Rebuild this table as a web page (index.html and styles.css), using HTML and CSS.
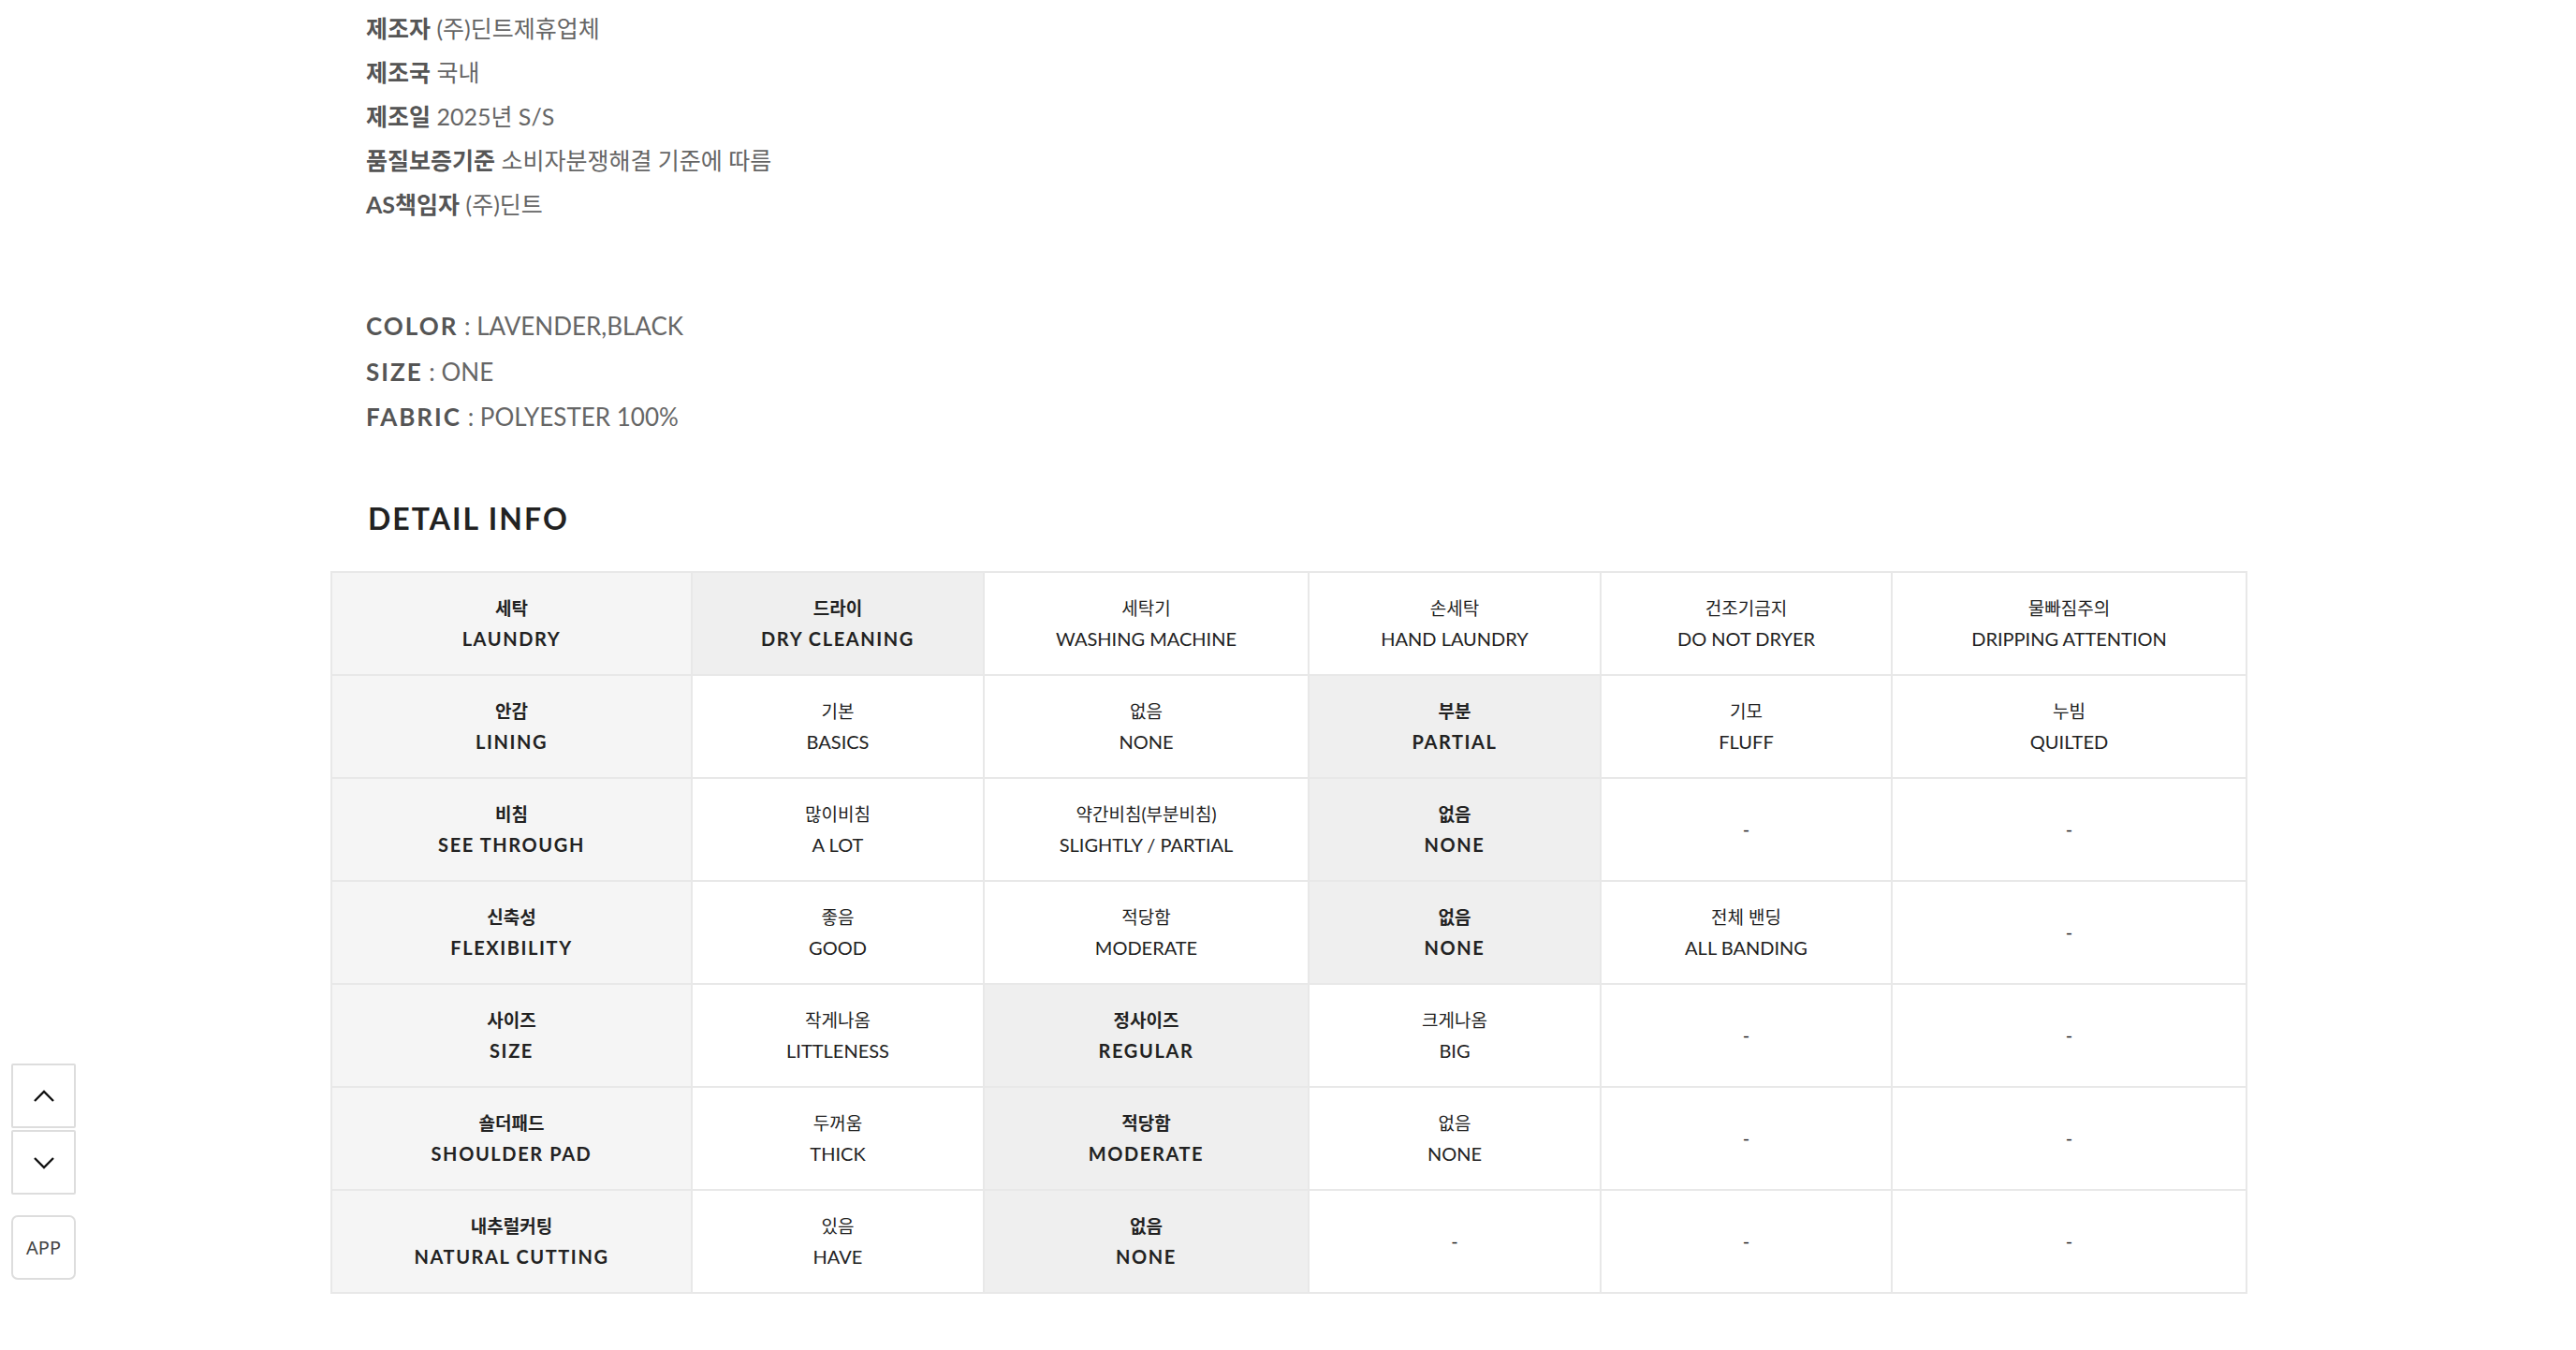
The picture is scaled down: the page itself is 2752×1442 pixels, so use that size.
FILE: index.html
```html
<!DOCTYPE html>
<html lang="ko">
<head>
    <meta charset="UTF-8">
    <title>상품 상세정보</title>
    <link rel="stylesheet" href="styles.css">
</head>
<body>
    <div class="detail">
        <div class="spec">
            <p><b>제조자</b> (주)딘트제휴업체</p>
            <p><b>제조국</b> 국내</p>
            <p><b>제조일</b> 2025년 S/S</p>
            <p><b>품질보증기준</b> 소비자분쟁해결 기준에 따름</p>
            <p><b>AS책임자</b> (주)딘트</p>
        </div>

        <div class="opts">
            <p><b>COLOR</b> : LAVENDER,BLACK</p>
            <p><b>SIZE</b> : ONE</p>
            <p><b>FABRIC</b> : POLYESTER 100%</p>
        </div>

        <h2 class="detail-title">DETAIL INFO</h2>

        <table class="info-table">
            <colgroup>
                <col style="width: 385px">
                <col style="width: 312px">
                <col style="width: 347px">
                <col style="width: 312px">
                <col style="width: 311px">
                <col style="width: 379px">
            </colgroup>
            <tr>
                <th><span>세탁</span><span>LAUNDRY</span></th>
                <td class="on"><span>드라이</span><span>DRY CLEANING</span></td>
                <td><span>세탁기</span><span>WASHING MACHINE</span></td>
                <td><span>손세탁</span><span>HAND LAUNDRY</span></td>
                <td><span>건조기금지</span><span>DO NOT DRYER</span></td>
                <td><span>물빠짐주의</span><span>DRIPPING ATTENTION</span></td>
            </tr>
            <tr>
                <th><span>안감</span><span>LINING</span></th>
                <td><span>기본</span><span>BASICS</span></td>
                <td><span>없음</span><span>NONE</span></td>
                <td class="on"><span>부분</span><span>PARTIAL</span></td>
                <td><span>기모</span><span>FLUFF</span></td>
                <td><span>누빔</span><span>QUILTED</span></td>
            </tr>
            <tr>
                <th><span>비침</span><span>SEE THROUGH</span></th>
                <td><span>많이비침</span><span>A LOT</span></td>
                <td><span>약간비침(부분비침)</span><span>SLIGHTLY / PARTIAL</span></td>
                <td class="on"><span>없음</span><span>NONE</span></td>
                <td>-</td>
                <td>-</td>
            </tr>
            <tr>
                <th><span>신축성</span><span>FLEXIBILITY</span></th>
                <td><span>좋음</span><span>GOOD</span></td>
                <td><span>적당함</span><span>MODERATE</span></td>
                <td class="on"><span>없음</span><span>NONE</span></td>
                <td><span>전체 밴딩</span><span>ALL BANDING</span></td>
                <td>-</td>
            </tr>
            <tr>
                <th><span>사이즈</span><span>SIZE</span></th>
                <td><span>작게나옴</span><span>LITTLENESS</span></td>
                <td class="on"><span>정사이즈</span><span>REGULAR</span></td>
                <td><span>크게나옴</span><span>BIG</span></td>
                <td>-</td>
                <td>-</td>
            </tr>
            <tr>
                <th><span>숄더패드</span><span>SHOULDER PAD</span></th>
                <td><span>두꺼움</span><span>THICK</span></td>
                <td class="on"><span>적당함</span><span>MODERATE</span></td>
                <td><span>없음</span><span>NONE</span></td>
                <td>-</td>
                <td>-</td>
            </tr>
            <tr>
                <th><span>내추럴커팅</span><span>NATURAL CUTTING</span></th>
                <td><span>있음</span><span>HAVE</span></td>
                <td class="on"><span>없음</span><span>NONE</span></td>
                <td>-</td>
                <td>-</td>
                <td>-</td>
            </tr>
        </table>
    </div>

    <!-- floating quick buttons -->
    <div class="quick">
        <a href="#" class="quick-btn">
            <svg width="24" height="14" viewBox="0 0 24 14"><polyline points="2,12 12,2 22,12" fill="none" stroke="#111" stroke-width="2.4"/></svg>
        </a>
        <a href="#" class="quick-btn">
            <svg width="24" height="14" viewBox="0 0 24 14"><polyline points="2,2 12,12 22,2" fill="none" stroke="#111" stroke-width="2.4"/></svg>
        </a>
        <a href="#" class="quick-btn app">APP</a>
    </div>
</body>
</html>
```

FILE: styles.css
```css
body {
    margin: 0;
    background: #fff;
    font-family: 'Lato', 'Noto Sans CJK KR', sans-serif;
    color: #222;
}

p {
    margin: 0;
}

.detail {
    width: 2046px;
    margin-left: 353px;
}

.spec {
    padding: 7px 38px 0;
    font-size: 25px;
    line-height: 47px;
    color: #666;
}

.spec b,
.opts b {
    color: #555;
    font-weight: 700;
}

.opts {
    margin-top: 82px;
    padding: 0 38px;
    font-size: 26px;
    line-height: 48.5px;
    color: #666;
}

.opts b {
    letter-spacing: 2px;
}

.detail-title {
    margin: 64px 0 0;
    padding: 0 40px;
    font-size: 32px;
    line-height: 40px;
    font-weight: 700;
    letter-spacing: 2px;
    color: #222;
}

.info-table {
    margin-top: 36px;
    width: 2046px;
    table-layout: fixed;
    border-collapse: collapse;
    border: 2px solid #e8e8e8;
}

.info-table th,
.info-table td {
    height: 108px;
    padding: 0;
    border: 2px solid #e8e8e8;
    text-align: center;
    vertical-align: middle;
    font-size: 20px;
    line-height: 33px;
    font-weight: 400;
    color: #222;
}

.info-table span {
    display: block;
}

.info-table span:first-child {
    font-size: 19px;
    letter-spacing: 0;
}

.info-table th,
.info-table td.on {
    font-weight: 700;
    letter-spacing: 1.6px;
}

.info-table th {
    background: #f5f5f5;
}

.info-table td.on {
    background: #efefef;
}

.quick {
    position: fixed;
    left: 12px;
    top: 1136px;
    display: flex;
    flex-direction: column;
    gap: 2px;
}

.quick-btn {
    display: flex;
    justify-content: center;
    align-items: center;
    width: 69px;
    height: 69px;
    box-sizing: border-box;
    border: 2px solid #ddd;
    border-radius: 2px;
    background: #fff;
    text-decoration: none;
}

.quick-btn.app {
    margin-top: 20px;
    border-radius: 7px;
    font-family: 'Noto Sans', sans-serif;
    font-size: 20px;
    color: #444;
}
```
